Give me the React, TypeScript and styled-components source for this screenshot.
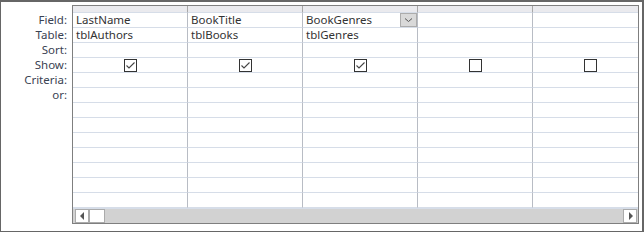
import styled, { createGlobalStyle } from "styled-components";

const GlobalStyle = createGlobalStyle`
  html, body {
    margin: 0;
    padding: 0;
    background: #ffffff;
  }
  body {
    font-family: "Noto Sans", "Open Sans", Arial, sans-serif;
    font-size: 11.5px;
    color: #333;
  }
`;

const Frame = styled.div`
  width: 644px;
  height: 232px;
  box-sizing: border-box;
  border-style: solid;
  border-color: #666;
  border-width: 2px 2px 1px 1px;
  display: flex;
  background: #fff;
`;

const Labels = styled.div`
  width: 71px;
  flex: none;
  padding-top: 11px;
  display: flex;
  flex-direction: column;
`;

const Label = styled.div`
  height: 15px;
  line-height: 14px;
  text-align: right;
  padding-right: 5px;
  color: #3a4252;
  white-space: nowrap;
`;

const Grid = styled.div`
  flex: 1;
  margin: 3px 3px 0 0;
  height: 219px;
  box-sizing: border-box;
  border: 1px solid #7f7f7f;
  display: flex;
  flex-direction: column;
  overflow: hidden;
`;

const Row = styled.div<{ $header?: boolean }>`
  display: grid;
  grid-template-columns: repeat(5, 115px);
  height: ${(p) => (p.$header ? 7 : 15)}px;
  flex: none;
  background: ${(p) => (p.$header ? "#eaeaee" : "#fff")};
`;

const Cell = styled.div<{ $header?: boolean }>`
  position: relative;
  box-sizing: border-box;
  border-bottom: 1px solid #d6dde8;
  border-right: ${(p) =>
    p.$header ? "1px solid #a8a8a8" : "1px solid #b8bcc4"};
  padding-left: 3px;
  line-height: 14px;
  white-space: nowrap;
  overflow: hidden;
  color: #333;
  display: flex;
  align-items: center;
`;

const CheckCell = styled(Cell)`
  justify-content: center;
  padding-left: 0;
`;

const Box = styled.div`
  width: 13px;
  height: 13px;
  box-sizing: border-box;
  border: 1px solid #333;
  background: #fff;
  display: flex;
  align-items: center;
  justify-content: center;
`;

const DropButton = styled.div`
  position: absolute;
  right: 0;
  top: 0;
  width: 17px;
  height: 14px;
  box-sizing: border-box;
  background: #d9d9d9;
  border: 1px solid #acacac;
  display: flex;
  align-items: center;
  justify-content: center;
`;

const ScrollBar = styled.div`
  flex: 1;
  background: #d2d2d2;
  display: flex;
  align-items: center;
  padding: 0 1px 0 2px;
  border-top: 1px solid #d6dde8;
`;

const ScrollButton = styled.div<{ $wide?: boolean }>`
  width: ${(p) => (p.$wide ? 16 : 14)}px;
  height: 14px;
  box-sizing: border-box;
  background: #fff;
  border: 1px solid #ababab;
  display: flex;
  align-items: center;
  justify-content: center;
`;

const Spacer = styled.div`
  flex: 1;
`;

const Check = ({ checked }: { checked: boolean }) => (
  <Box>
    {checked && (
      <svg width="11" height="11" viewBox="0 0 11 11">
        <polyline
          points="1.5,5.5 4,8 9.5,2.5"
          fill="none"
          stroke="#444"
          strokeWidth="1.1"
        />
      </svg>
    )}
  </Box>
);

const labels = ["Field:", "Table:", "Sort:", "Show:", "Criteria:", "or:"];

const fields = [
  { field: "LastName", table: "tblAuthors", show: true },
  { field: "BookTitle", table: "tblBooks", show: true },
  { field: "BookGenres", table: "tblGenres", show: true, active: true },
  { field: "", table: "", show: false },
  { field: "", table: "", show: false },
];

const emptyRows = Array.from({ length: 9 });

const App = () => {
  return (
    <>
      <GlobalStyle />
      <Frame>
        <Labels>
          {labels.map((l) => (
            <Label key={l}>{l}</Label>
          ))}
        </Labels>
        <Grid>
          <Row $header>
            {fields.map((_, i) => (
              <Cell key={i} $header />
            ))}
          </Row>
          <Row>
            {fields.map((f, i) => (
              <Cell key={i}>
                {f.field}
                {f.active && (
                  <DropButton>
                    <svg width="9" height="6" viewBox="0 0 9 6">
                      <polyline
                        points="1,1.5 4.5,4.5 8,1.5"
                        fill="none"
                        stroke="#555"
                        strokeWidth="1"
                      />
                    </svg>
                  </DropButton>
                )}
              </Cell>
            ))}
          </Row>
          <Row>
            {fields.map((f, i) => (
              <Cell key={i}>{f.table}</Cell>
            ))}
          </Row>
          <Row>
            {fields.map((_, i) => (
              <Cell key={i} />
            ))}
          </Row>
          <Row>
            {fields.map((f, i) => (
              <CheckCell key={i}>
                <Check checked={f.show} />
              </CheckCell>
            ))}
          </Row>
          {emptyRows.map((_, r) => (
            <Row key={r}>
              {fields.map((_, i) => (
                <Cell key={i} />
              ))}
            </Row>
          ))}
          <ScrollBar>
            <ScrollButton>
              <svg width="5" height="8" viewBox="0 0 5 8">
                <polygon points="4,0 0,4 4,8" fill="#555" />
              </svg>
            </ScrollButton>
            <ScrollButton $wide />
            <Spacer />
            <ScrollButton>
              <svg width="5" height="8" viewBox="0 0 5 8">
                <polygon points="1,0 5,4 1,8" fill="#555" />
              </svg>
            </ScrollButton>
          </ScrollBar>
        </Grid>
      </Frame>
    </>
  );
};

export default App;
